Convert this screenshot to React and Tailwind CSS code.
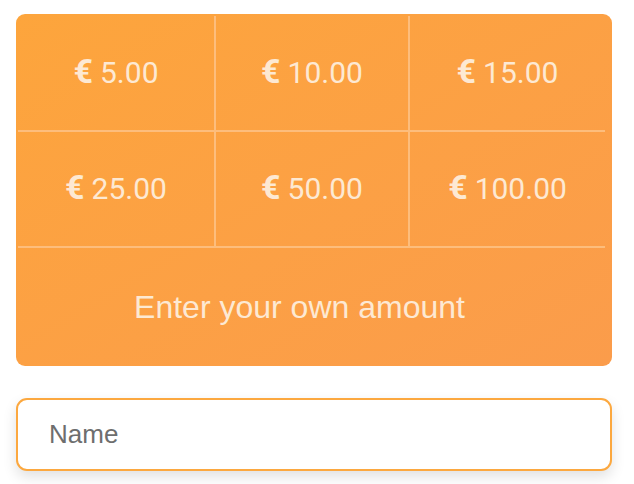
const amounts = ['5.00', '10.00', '15.00', '25.00', '50.00', '100.00'];

export default function App() {
  return (
    <div className="w-[634px] h-[484px] bg-white pt-[14px] pl-[16px]">
      {/* Amount picker */}
      <div className="w-[596px] h-[352px] rounded-[9px] bg-gradient-to-br from-[#fda53c] to-[#fb9c4b] pt-[2px] pl-[2px]">
        <div className="w-[587px] grid grid-cols-[198px_194px_195px]">
          {amounts.map((a, i) => (
            <div
              key={a}
              className={
                'h-[116px] flex items-center justify-center border-b-2 border-[#fdbd7c] text-[#fde9d3] ' +
                (i % 3 !== 2 ? 'border-r-2' : '')
              }
              style={{ fontFamily: 'Roboto, "DejaVu Sans", sans-serif' }}
            >
              <p className="text-[30px] leading-none -mt-[4px]">
                <span className="font-bold text-[34px] mr-[7px]">€</span>
                {a}
              </p>
            </div>
          ))}
        </div>
        <div
          className="w-[587px] h-[117px] flex items-center justify-center pr-[24px] text-[32px] text-[#fde9d3]"
          style={{ fontFamily: '"Liberation Sans", Arial, sans-serif' }}
        >
          Enter your own amount
        </div>
      </div>

      {/* Name field */}
      <div className="mt-[32px] w-[596px] h-[73px] rounded-[11px] border-2 border-[#fca83f] bg-white shadow-[0_6px_14px_rgba(0,0,0,0.12)] flex items-center px-[31px]">
        <span
          className="text-[26px] text-[#6e6e6e]"
          style={{ fontFamily: '"Liberation Sans", Arial, sans-serif' }}
        >
          Name
        </span>
      </div>
    </div>
  );
}
